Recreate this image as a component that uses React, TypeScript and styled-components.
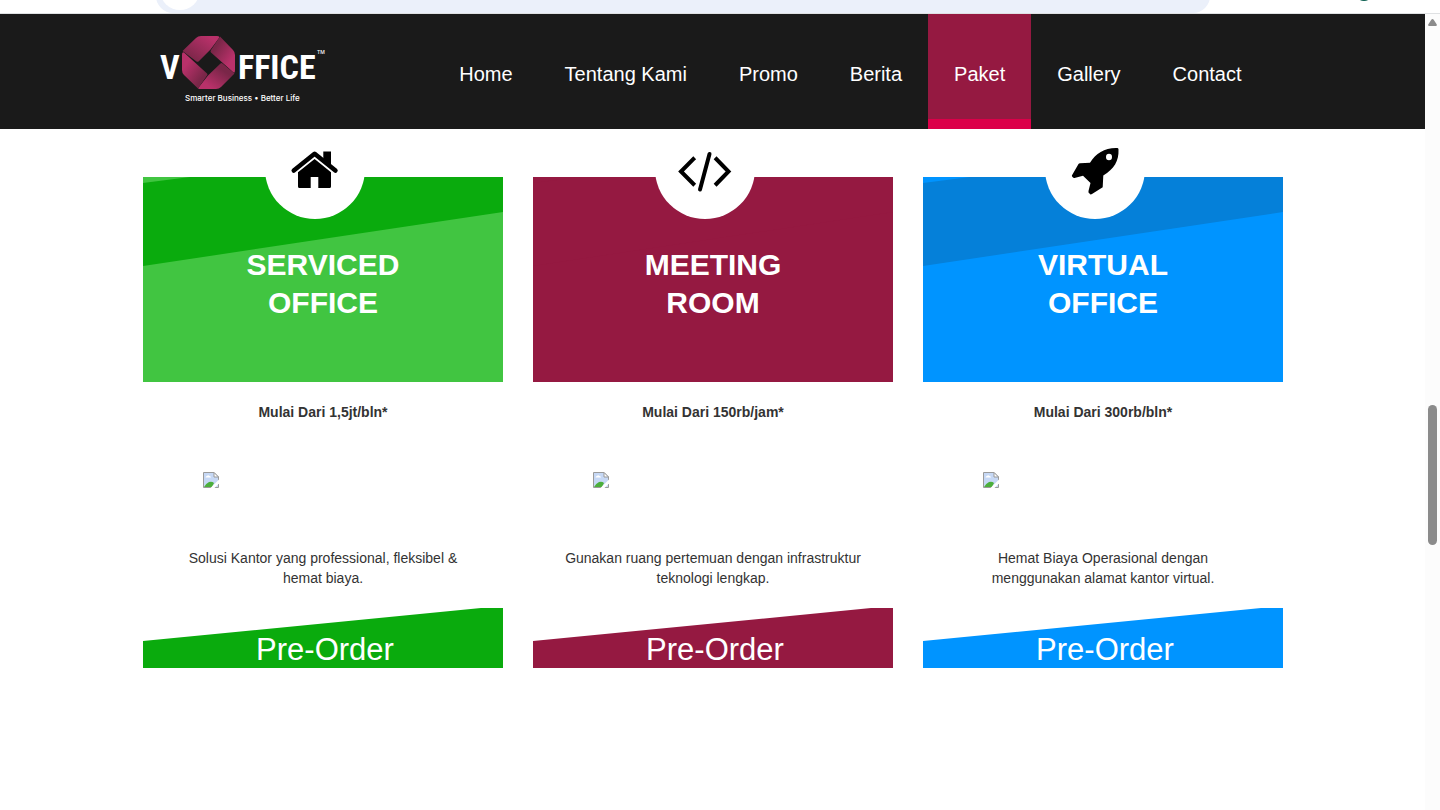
import React from "react";
import styled, { createGlobalStyle } from "styled-components";

const GlobalStyle = createGlobalStyle`
  *, *::before, *::after { box-sizing: border-box; }
  body {
    margin: 0;
    background: #fff;
    color: #333;
    font: 14px/20px "Liberation Sans", Arial, sans-serif;
  }
`;

const Shell = styled.div`
  display: flex;
  flex-direction: column;
  min-height: 100vh;
`;

const BrowserBar = styled.div`
  display: flex;
  align-items: flex-end;
  justify-content: space-between;
  height: 14px;
  overflow: hidden;
  padding: 0 67px 0 156px;
  border-bottom: 1px solid #dfe1e3;
`;

const AddressBar = styled.div`
  display: flex;
  align-items: flex-end;
  flex: 0 1 1054px;
  height: 34px;
  padding: 0 4px 3px;
  border-radius: 20px;
  background: #ebf0fa;
`;

const SiteBadge = styled.span`
  width: 40px;
  height: 40px;
  border-radius: 20px;
  background: #fff;
`;

const ProfileDot = styled.span`
  width: 18px;
  height: 18px;
  margin-bottom: 12px;
  border-radius: 50%;
  background: #0b5f50;
`;

const Viewport = styled.div`
  display: flex;
  flex: 1;
`;

const Page = styled.div`
  flex: 1;
  min-width: 0;
`;

const Scrollbar = styled.div`
  display: flex;
  flex-direction: column;
  align-items: center;
  width: 15px;
  padding-top: 5px;
  background: #fcfcfc;
`;

const ScrollArrow = styled.svg`
  display: block;
  width: 9px;
  height: 7px;
`;

const ScrollThumb = styled.div`
  width: 9px;
  height: 140px;
  margin-top: 379px;
  border-radius: 5px;
  background: #8b8b8b;
`;

const Header = styled.header`
  position: relative;
  z-index: 2;
  background: #1a1a1a;
`;

const HeaderInner = styled.div`
  display: flex;
  justify-content: space-between;
  align-items: center;
  max-width: 1170px;
  min-height: 115px;
  margin: 0 auto;
  padding: 0 30px;
`;

const LogoLink = styled.a`
  display: block;
`;

const LogoArt = styled.svg`
  display: block;
  width: 170px;
  height: 79px;
`;

const Nav = styled.nav`
  display: flex;
  flex-wrap: wrap;
`;

const NavLink = styled.a<{ $active?: boolean }>`
  height: 115px;
  padding: 48px 26px 0;
  border-bottom: 10px solid ${(p) => (p.$active ? "#dc0049" : "transparent")};
  background: ${(p) => (p.$active ? "#951941" : "transparent")};
  background-clip: padding-box;
  color: #fff;
  font-size: 20px;
  line-height: 24px;
  text-decoration: none;
`;

const Plans = styled.main`
  display: grid;
  grid-template-columns: repeat(auto-fit, minmax(300px, 1fr));
  gap: 30px;
  max-width: 1171px;
  margin: 0 auto;
  padding: 48px 15px 48px 16px;
`;

const Card = styled.article`
  display: flex;
  flex-direction: column;
  text-align: center;
`;

const Banner = styled.div<{ $base: string; $band: string }>`
  position: relative;
  height: 205px;
  padding: 69px 90px 0;
  background: ${(p) => p.$base};

  &::before {
    content: "";
    position: absolute;
    inset: 0;
    background: ${(p) => p.$band};
    clip-path: polygon(0 6px, 47px 0, 100% 0, 100% 35px, 0 89px);
  }
`;

const IconDisc = styled.div`
  position: absolute;
  top: -58px;
  left: calc(50% - 58px);
  width: 100px;
  height: 100px;
  border-radius: 50%;
  background: #fff;
`;

const IconArt = styled.svg`
  display: block;
  width: 100%;
  height: 100%;
`;

const Title = styled.h2`
  position: relative;
  margin: 0;
  color: #fff;
  font-size: 30px;
  line-height: 38px;
`;

const Price = styled.p`
  margin: 20px 0 0;
  font-weight: 700;
`;

const Picture = styled.svg`
  display: block;
  width: 16px;
  height: 16px;
  margin: 50px 0 60px 60px;
`;

const Description = styled.p`
  margin: 0 0 20px;
  padding: 0 30px;
`;

const OrderLink = styled.a<{ $color: string }>`
  display: block;
  height: 60px;
  padding: 24px 0 0 4px;
  background: ${(p) => p.$color};
  clip-path: polygon(0 33px, 338px 0, 100% 0, 100% 100%, 0 100%);
  color: #fff;
  font-size: 31px;
  line-height: 36px;
  text-decoration: none;
`;

const logoFont = '"Liberation Sans Narrow", "Roboto Condensed", "Liberation Sans", sans-serif';

function Logo() {
  return (
    <LogoArt viewBox="0 0 170 79" role="img" aria-label="VOffice">
      <defs>
        <linearGradient id="tl" x1="0" y1="1" x2="1" y2="0">
          <stop offset="0.15" stopColor="#7a2648" />
          <stop offset="0.85" stopColor="#b9316a" />
        </linearGradient>
        <linearGradient id="tr" x1="0" y1="0" x2="1" y2="1">
          <stop offset="0.25" stopColor="#7a2648" />
          <stop offset="0.75" stopColor="#b9316a" />
        </linearGradient>
        <linearGradient id="br" x1="1" y1="0" x2="0" y2="1">
          <stop offset="0.3" stopColor="#7a2648" />
          <stop offset="0.8" stopColor="#b9316a" />
        </linearGradient>
        <linearGradient id="bl" x1="0" y1="0" x2="1" y2="1">
          <stop offset="0.25" stopColor="#b9316a" />
          <stop offset="0.75" stopColor="#7a2648" />
        </linearGradient>
      </defs>
      <path d="M24.500 19 38 6Q40 4 43 4H59Q62 4 61 6L52.500 17.500 40.500 29.500Q39.500 30 38.500 29.500Z" fill="url(#tl)" />
      <path d="M62 4.500 75 18Q77 20 77 23V38Q77 42 75 40L53 20.500Q52 19.500 53 18Z" fill="url(#tr)" />
      <path d="M76.500 41.500 63 55Q61 57 58 57H42Q39 57 41 55L50 43.500 62.500 31.500Q63.500 30.500 64.500 31.500Z" fill="url(#br)" />
      <path d="M40 56.500 26 43Q24 41 24 38V23Q24 19 26.500 21L49 41.500Q50 42.500 49 43.500Z" fill="url(#bl)" />
      <g fill="#fff" fontFamily={logoFont} fontWeight="700">
        <text x="2" y="47" fontSize="34">V</text>
        <text x="80" y="47" fontSize="34">FFICE</text>
      </g>
      <g fill="#fff" fontFamily='Inter, "Liberation Sans", sans-serif' fontWeight="500">
        <text x="159" y="22" fontSize="5">TM</text>
        <text x="27" y="69" fontSize="8">Smarter Business • Better Life</text>
      </g>
    </LogoArt>
  );
}

function HouseIcon() {
  return (
    <IconArt viewBox="0 0 100 100" aria-hidden="true">
      <path d="M58.3 32.5H66V48L58.3 41Z" />
      <path d="M28.8 51.5 49.6 34.8 70.4 51.5" fill="none" stroke="#000" strokeWidth="4.6" strokeLinejoin="round" strokeLinecap="round" />
      <path d="M49.6 40 66 53.2V67.5Q66 69 64.5 69H53.3V58H45.7V69H34.5Q33 69 33 67.5V53.2Z" />
    </IconArt>
  );
}

function CodeIcon() {
  return (
    <IconArt viewBox="0 0 100 100" aria-hidden="true">
      <g fill="none" stroke="#000" strokeWidth="4">
        <path d="M38.3 40.2 26 52.5 38.3 64.8" strokeLinecap="square" />
        <path d="M61.5 40.2 73.5 52.5 61.5 64.8" strokeLinecap="square" />
        <path d="M54.5 35 45 70.5" strokeLinecap="round" />
      </g>
    </IconArt>
  );
}

function RocketIcon() {
  return (
    <IconArt viewBox="0 0 100 100" aria-hidden="true">
      <path
        fillRule="evenodd"
        d="M72.5 29Q73.500 29 73.500 30.500C74 42 69 50 58.300 56.500L57.700 68.300 47 75Q45.500 76 44.500 74.500 43 73.500 43.500 72L45.500 64 38 56.700 29.500 59Q28.500 59.300 27.500 58 26.500 57 27 56.200L33.500 45Q34 44.300 35 44.300L45 43.700C51 34 60 28.500 72.500 29ZM64 34.800A3 3.200 0 1 0 64 41.200A3 3.200 0 1 0 64 34.800Z"
      />
    </IconArt>
  );
}

function MissingPicture() {
  return (
    <Picture viewBox="0 0 16 16" role="img" aria-label="Missing picture">
      <path d="M.5 .5H11L15.5 5V15.5H.5Z" fill="#c6d8f5" stroke="#9a9a9a" />
      <path d="M2.5 5.5Q2.500 4 4 4 5 2.500 6.500 4 8 4 8 5.500Z" fill="#fff" />
      <path d="M1 15Q3 11.500 6 10Q9 9 11 11L9 15Z" fill="#4caf3c" />
      <path d="M11 .5V5H15.5Z" fill="#fff" stroke="#9a9a9a" />
      <path d="M7.500 16 16 7.500V11.500L11.500 16Z" fill="#fff" />
    </Picture>
  );
}

const links = ["Home", "Tentang Kami", "Promo", "Berita", "Paket", "Gallery", "Contact"];

const plans = [
  {
    title: "SERVICED OFFICE",
    price: "Mulai Dari 1,5jt/bln*",
    text: "Solusi Kantor yang professional, fleksibel & hemat biaya.",
    base: "#41c541",
    band: "#0aab0d",
    order: "#0aab0d",
    icon: <HouseIcon />,
  },
  {
    title: "MEETING ROOM",
    price: "Mulai Dari 150rb/jam*",
    text: "Gunakan ruang pertemuan dengan infrastruktur teknologi lengkap.",
    base: "#951941",
    band: "#951941",
    order: "#951941",
    icon: <CodeIcon />,
  },
  {
    title: "VIRTUAL OFFICE",
    price: "Mulai Dari 300rb/bln*",
    text: "Hemat Biaya Operasional dengan menggunakan alamat kantor virtual.",
    base: "#0094ff",
    band: "#0580d9",
    order: "#0094ff",
    icon: <RocketIcon />,
  },
];

export default function App() {
  return (
    <Shell>
      <GlobalStyle />
      <BrowserBar>
        <AddressBar>
          <SiteBadge />
        </AddressBar>
        <ProfileDot />
      </BrowserBar>
      <Viewport>
        <Page>
          <Header>
            <HeaderInner>
              <LogoLink href="#home">
                <Logo />
              </LogoLink>
              <Nav>
                {links.map((label) => (
                  <NavLink key={label} href="#" $active={label === "Paket"}>
                    {label}
                  </NavLink>
                ))}
              </Nav>
            </HeaderInner>
          </Header>
          <Plans>
            {plans.map((plan) => (
              <Card key={plan.title}>
                <Banner $base={plan.base} $band={plan.band}>
                  <IconDisc>{plan.icon}</IconDisc>
                  <Title>{plan.title}</Title>
                </Banner>
                <Price>{plan.price}</Price>
                <MissingPicture />
                <Description>{plan.text}</Description>
                <OrderLink href="#" $color={plan.order}>
                  Pre-Order
                </OrderLink>
              </Card>
            ))}
          </Plans>
        </Page>
        <Scrollbar aria-hidden="true">
          <ScrollArrow viewBox="0 0 9 7">
            <path d="M4.500 0Q5.200 0 5.700.8L8.800 5.500Q9 7 8 7H1Q0 7 .2 5.500L3.300.8Q3.800 0 4.500 0Z" fill="#8b8b8b" />
          </ScrollArrow>
          <ScrollThumb />
        </Scrollbar>
      </Viewport>
    </Shell>
  );
}
